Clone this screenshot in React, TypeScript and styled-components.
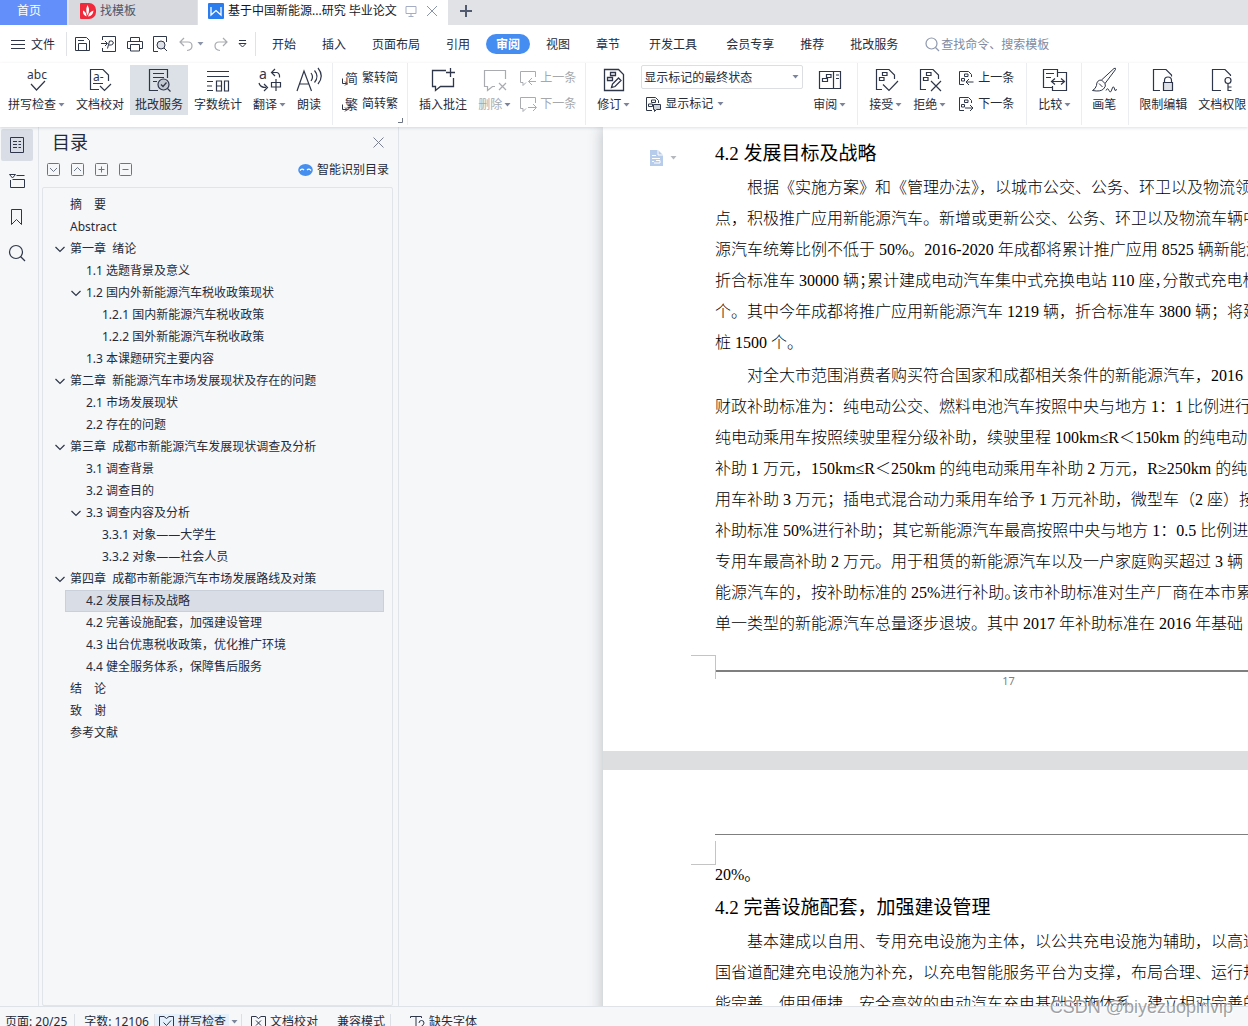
import React from "react";
import styled, { createGlobalStyle, css } from "styled-components";

const uiFont = `"Noto Sans", "Noto Sans CJK SC", sans-serif`;
const docFont = `"Liberation Serif", "Noto Sans CJK SC", serif`;
const ink = "#262b3a";

const GlobalStyle = createGlobalStyle`
  * { box-sizing: border-box; }
  body { margin: 0; overflow: hidden; background: #f5f7f9; }
  button, input, select { font: inherit; color: inherit; }
  button { border: 0; background: none; padding: 0; cursor: pointer; }
  svg { display: block; flex: none; overflow: visible; }
`;

const Shell = styled.div`
  display: flex;
  flex-direction: column;
  height: 100vh;
  overflow: hidden;
  font: 12px/18px ${uiFont};
  color: ${ink};
  white-space: nowrap;
`;

/* ---------- window tabs ---------- */
const TabBar = styled.div`
  display: flex;
  height: 25px;
  flex: none;
  background: #e1e2e6;
`;
const WindowTab = styled.button<{ $kind: "home" | "idle" | "open" }>`
  display: flex;
  align-items: center;
  gap: 4px;
  height: 25px;
  padding-bottom: 4px;
  ${(p) =>
    p.$kind === "home" &&
    css`
      width: 67px;
      padding-right: 9px;
      justify-content: center;
      color: #fff;
      background: #628ffa;
      margin-right: 2px;
    `}
  ${(p) =>
    p.$kind === "idle" &&
    css`
      width: 128px;
      padding-left: 11px;
      color: #50566a;
      background: #d7d9de;
      margin-right: 1px;
    `}
  ${(p) =>
    p.$kind === "open" &&
    css`
      width: 250px;
      padding-left: 10px;
      color: #15181f;
      background: #fff;
    `}
`;
const TabActions = styled.span`
  display: flex;
  align-items: center;
  gap: 9px;
  margin-left: 4px;
`;
const NewTab = styled.button`
  padding: 0 12px 4px;
`;

/* ---------- menu ---------- */
const MenuBar = styled.nav`
  display: flex;
  align-items: center;
  height: 38px;
  flex: none;
  background: #fff;
`;
const FileButton = styled.button`
  display: flex;
  align-items: center;
  gap: 6px;
  width: 66px;
  padding: 2px 0 0 11px;
`;
const Divider = styled.span`
  width: 1px;
  height: 24px;
  background: #e0e2e6;
`;
const QuickTools = styled.div`
  display: flex;
  align-items: center;
  justify-content: space-between;
  width: 188px;
  padding: 0 8px;
`;
const QuickButton = styled.button`
  display: flex;
  align-items: center;
  gap: 4px;
`;
const MenuTabs = styled.div`
  display: flex;
  align-items: center;
  gap: 6px;
  padding-left: 6px;
`;
const MenuTab = styled.button<{ $active?: boolean; $wide?: boolean }>`
  height: 20px;
  padding: 2px ${(p) => (p.$wide ? 13 : 10)}px 0;
  border-radius: 10px;
  ${(p) =>
    p.$active &&
    css`
      color: #fff;
      font-weight: 700;
      background: #468df2;
    `}
`;
const SearchField = styled.label`
  display: flex;
  align-items: center;
  gap: 1px;
  margin-left: 17px;
  padding-top: 1px;
  color: #808aa3;
`;
const SearchInput = styled.input`
  width: 130px;
  padding: 0;
  border: 0;
  outline: 0;
  background: none;
  &::placeholder { color: #808aa3; opacity: 1; }
`;

/* ---------- ribbon ---------- */
const Ribbon = styled.div`
  position: relative;
  z-index: 2;
  display: flex;
  gap: 1px;
  height: 64px;
  flex: none;
  padding: 2px 0 0 3px;
  background: #fff;
  box-shadow: 0 1px 3px rgba(40, 50, 70, 0.16);
`;
const BigButton = styled.button<{ $active?: boolean; $muted?: boolean }>`
  display: flex;
  flex-direction: column;
  align-items: flex-start;
  gap: 2px;
  flex: none;
  height: 50px;
  padding: 2px 5px 0;
  ${(p) => p.$active && css`background: #dbe1e6;`}
  ${(p) => p.$muted && css`color: #a6a8ad;`}
`;
const IconSlot = styled.span<{ $label: number }>`
  display: flex;
  justify-content: center;
  min-width: ${(p) => p.$label}px;
  height: 26px;
`;
const LabelLine = styled.span`
  display: flex;
  align-items: center;
  gap: 2px;
  height: 20px;
`;
const SmallColumn = styled.div<{ $pad?: number }>`
  display: flex;
  flex-direction: column;
  gap: 4px;
  flex: none;
  padding: 2px ${(p) => p.$pad ?? 0}px 0;
`;
const SmallButton = styled.button<{ $muted?: boolean }>`
  display: flex;
  align-items: center;
  gap: 4px;
  height: 22px;
  padding: 0 3px;
  ${(p) => p.$muted && css`color: #a6a8ad;`}
`;
const RibbonRule = styled.span<{ $tight?: boolean }>`
  width: 1px;
  height: 62px;
  flex: none;
  margin: -2px ${(p) => (p.$tight ? 4 : 5)}px 0;
  background: #ebedf0;
`;
const LaunchRule = styled(RibbonRule)`
  display: flex;
  align-items: flex-end;
  justify-content: flex-end;
  padding-bottom: 2px;
  & > svg { margin-right: 5px; }
`;
const MarkupColumn = styled.div`
  display: flex;
  flex-direction: column;
  gap: 5px;
  flex: none;
  width: 171px;
  padding: 0 4px 0 5px;
`;
const SelectBox = styled.label`
  display: flex;
  align-items: center;
  height: 24px;
  padding-right: 3px;
  border: 1px solid #dcdee2;
  border-radius: 2px;
`;
const MarkupSelect = styled.select`
  flex: 1;
  min-width: 0;
  padding: 1px 2px 0;
  border: 0;
  outline: 0;
  appearance: none;
  background: none;
`;
const MarkupButton = styled(SmallButton)`
  height: 20px;
  padding-left: 4px;
`;

/* ---------- body ---------- */
const Main = styled.main`
  display: flex;
  flex: 1;
  min-height: 0;
`;
const Rail = styled.aside`
  display: flex;
  flex-direction: column;
  gap: 4px;
  width: 39px;
  flex: none;
  padding: 2px 0 0 1px;
  border-right: 1px solid #e1e4ea;
`;
const RailButton = styled.button<{ $active?: boolean }>`
  display: flex;
  align-items: center;
  justify-content: center;
  width: 32px;
  height: 32px;
  border-radius: 2px;
  background: ${(p) => (p.$active ? "#d9dee6" : "none")};
`;
const Outline = styled.section`
  display: flex;
  flex-direction: column;
  width: 360px;
  flex: none;
  padding: 0 5px 0 3px;
  border-right: 1px solid #e1e4ea;
`;
const OutlineHead = styled.header`
  display: flex;
  align-items: center;
  justify-content: space-between;
  height: 30px;
  padding: 0 9px 0 10px;
`;
const OutlineTitle = styled.h2`
  margin: 0;
  font-size: 18px;
  line-height: 28px;
  font-weight: 400;
`;
const OutlineTools = styled.div`
  display: flex;
  align-items: center;
  gap: 11px;
  height: 24px;
  padding: 0 4px 0 5px;
  margin-bottom: 6px;
`;
const SmartButton = styled.button`
  display: flex;
  align-items: center;
  gap: 4px;
  margin-left: auto;
  padding-top: 2px;
`;
const Tree = styled.ul`
  flex: 1;
  margin: 0;
  padding: 6px 8px 0 11px;
  list-style: none;
  border: 1px solid #e1e4ea;
  border-radius: 2px;
`;
const TreeItem = styled.li`
  display: flex;
`;
const TreeButton = styled.button<{ $level: number; $active?: boolean }>`
  display: flex;
  align-items: center;
  width: 100%;
  height: 22px;
  margin-left: ${(p) => (p.$active ? 11 : 0)}px;
  padding-left: ${(p) => p.$level * 16 - (p.$active ? 11 : 0)}px;
  white-space: pre;
  ${(p) =>
    p.$active &&
    css`
      background: #d9dde5;
      box-shadow: inset 0 0 0 1px #c9d0da;
    `}
`;
const Twisty = styled.span`
  display: flex;
  width: 16px;
`;

/* ---------- document ---------- */
const Canvas = styled.div`
  flex: 1;
  min-width: 0;
  padding-left: 204px;
  overflow: hidden;
`;
const Sheets = styled.div`
  display: flex;
  flex-direction: column;
  gap: 19px;
  width: 794px;
  background: #dddee0;
  box-shadow: 0 0 14px rgba(60, 66, 76, 0.32);
`;
const Sheet = styled.article`
  padding: 0 96px 0 112px;
  background: #fff;
  color: #000;
  font: 16px/31px ${docFont};
`;
const FirstSheet = styled(Sheet)`
  height: 624px;
  padding-top: 9px;
`;
const SecondSheet = styled(Sheet)`
  height: 1123px;
  padding-top: 64px;
`;
const HeadingRow = styled.div`
  display: flex;
  align-items: center;
  margin-left: -66px;
`;
const ParagraphMenu = styled.button`
  display: flex;
  align-items: center;
  gap: 7px;
  width: 66px;
  padding-top: 8px;
`;
const Heading = styled.h3`
  margin: 0;
  font-size: 19px;
  line-height: 36px;
  font-weight: 400;
`;
const Paragraph = styled.p`
  margin: 0 0 2px;
  font-weight: 300;
  text-indent: 32px;
`;
const Line = styled.span`
  display: block;
  & + & { text-indent: 0; }
`;
const Half = styled.span`
  font-feature-settings: "halt";
`;
const MarginRow = styled.div`
  display: flex;
  align-items: flex-start;
  margin-left: -24px;
`;
const CropMark = styled.span<{ $edge: "top" | "bottom" }>`
  width: 25px;
  height: 24px;
  margin-right: -1px;
  flex: none;
  border-right: 1px solid #c4c4c4;
  border-${(p) => p.$edge}: 1px solid #c4c4c4;
`;
const PageFoot = styled.footer`
  flex: 1;
  margin: 15px 0 0 1px;
  border-top: 2px solid #7f7f7f;
  font: 11px/18px ${uiFont};
  color: #808080;
  text-align: center;
`;
const FootRow = styled(MarginRow)`
  margin-top: 16px;
`;
const PageHead = styled.header`
  height: 7px;
  border-top: 1px solid #7f7f7f;
`;
const Carried = styled.p`
  margin: 18px 0 0;
`;

/* ---------- status ---------- */
const StatusBar = styled.footer`
  display: flex;
  align-items: flex-start;
  height: 20px;
  flex: none;
  padding: 7px 0 0 5px;
  overflow: hidden;
  border-top: 1px solid #dfe2e7;
  background: #f5f7f9;
  line-height: 16px;
`;
const StatusItem = styled.button<{ $lit?: boolean }>`
  display: flex;
  align-items: center;
  gap: 4px;
  height: 16px;
  padding: ${(p) => (p.$lit ? "0 3px 0 4px" : "0")};
  background: ${(p) => (p.$lit ? "#e4f0fb" : "none")};
`;
const StatusGroup = styled.div`
  display: flex;
  gap: 19px;
`;
const StatusRule = styled.span<{ $before?: number; $after?: number }>`
  width: 1px;
  height: 16px;
  margin: 0 ${(p) => p.$after ?? 0}px 0 ${(p) => p.$before ?? 0}px;
  background: #dcdfe5;
`;
const StatusArrow = styled.button`
  padding: 6px 0 0 2px;
`;
const Watermark = styled.div`
  position: absolute;
  right: 15px;
  bottom: 7px;
  z-index: 3;
  font: 18px/24px "Liberation Sans", sans-serif;
  color: rgba(130, 130, 134, 0.75);
  text-shadow: 1px 1px 1px #fff;
`;

/* ---------- drawings ---------- */
type DrawProps = { w: number; h: number; c?: string; s?: number; children: React.ReactNode };
const Draw = ({ w, h, c = "#2f3649", s = 1, children }: DrawProps) => (
  <svg width={w} height={h} viewBox={`0 0 ${w} ${h}`} fill="none" stroke={c} strokeWidth={s} aria-hidden="true">
    {children}
  </svg>
);
const Caret = ({ c = "#7b849b" }: { c?: string }) => (
  <svg width="7" height="4" viewBox="0 0 7 4" aria-hidden="true">
    <path d="M0.500 0H6.500L3.500 3.600Z" fill={c} />
  </svg>
);
const glyph = { stroke: "none", fill: "#2f3649", fontFamily: "Noto Sans, Noto Sans CJK SC, sans-serif" };

const SpellIcon = () => (
  <Draw w={24} h={26} s={1.2}>
    <text x="12" y="12" fontSize="12" textAnchor="middle" {...glyph}>abc</text>
    <path d="M6 17l5.500 6L20 14" />
  </Draw>
);
const ProofIcon = () => (
  <Draw w={24} h={26} s={1.2}>
    <path d="M11 22.500H2.500V2.500H15L20.500 8V14" />
    <text x="5" y="14" fontSize="12" {...glyph}>a-</text>
    <path d="M5 16.500H15M12 19l4.500 4.500L23 17" />
  </Draw>
);
const ReviewServiceIcon = () => (
  <Draw w={24} h={26} s={1.2}>
    <path d="M11 23.500H2.500V2.500H20.500V11M6 6.500H17M6 10.500H17M6 14.500H10" />
    <circle cx="16.500" cy="17.500" r="5.500" fill="#c3c9d1" />
    <path d="M20.500 21.500l3 3M14 17.500l2 2 3.500-4" />
  </Draw>
);
const CountIcon = () => (
  <Draw w={24} h={26} s={1.2}>
    <path d="M1 4.500H23M1 9.500H23M1 14.500H7M1 19H6M1 23.500H7M10.500 14H15.500V24H10.500ZM10.500 19H15.500M18.500 14H22.500V24H18.500Z" />
  </Draw>
);
const TranslateIcon = () => (
  <Draw w={24} h={26} s={1.2}>
    <text x="1" y="12" fontSize="14" {...glyph}>a</text>
    <path d="M17 2l-3.500 3.500L17 9M14 5.500h5q3 1 2.500 5M1 16q1 4.500 7 4.500M6 17l3.500 3.500L6 24" />
    <path d="M13.500 15.500H22.500V20H13.500ZM18 12V24" />
  </Draw>
);
const ReadIcon = () => (
  <Draw w={24} h={26} s={1.2}>
    <path d="M0 24L7 4 14.500 24M2.500 17H12M14 6q3 4 0 8M17.500 3.500q5 6 0 12M21 1q6.500 8 0 16" />
  </Draw>
);
const CharIcon = ({ ch }: { ch: string }) => (
  <Draw w={16} h={16}>
    <text x="3" y="13" fontSize="13" {...glyph}>{ch}</text>
    <path d="M0.500 8.500V13.500H4.500M3 11.500l2 2-2 2" />
  </Draw>
);
const CommentIcon = () => (
  <Draw w={24} h={26} s={1.3}>
    <path d="M15 3.500H1.500V19.500H4.500V23.500L9.500 19.500H22.500V11M19.500 1V10M15 5.500H24" />
  </Draw>
);
const DeleteIcon = () => (
  <Draw w={24} h={26} c="#a9abb0" s={1.2}>
    <path d="M22.500 12V3.500H1.500V19.500H4.500V23.500L9.500 19.500H12M16 16l7 7M23 16l-7 7" />
  </Draw>
);
const StepComment = ({ next }: { next?: boolean }) => (
  <Draw w={16} h={16} c="#a9abb0">
    <path d="M15.500 7V1.500H0.500V12.500H3V15.500L6 12.500" />
    <path d={next ? "M8 11.500H16M13 8l3.500 3.500L13 15" : "M8.500 11.500H16M12 8l-3.500 3.500L12 15"} />
  </Draw>
);
const ReviseIcon = () => (
  <Draw w={22} h={26} s={1.3}>
    <path d="M1.500 2.500H15.500L20.500 7.500V23.500H1.500Z" />
    <path d="M7.500 5.500H12.500V8.500H7.500ZM4.500 10.500H9.500V13.500H4.500ZM8.500 20.500l1-3.500 6-6 2.500 2.500-6 6Z" />
  </Draw>
);
const MarkupIcon = () => (
  <Draw w={16} h={16}>
    <path d="M7 14.500H1.500V1.500H10.500L13.500 4.500V7M6.500 4H10.500V6.500H6.500ZM3.500 8H7.500V10.500H3.500Z" />
    <path d="M8.500 8.500H15.500V13.500H11.500L9.500 15.500V13.500H8.500Z" fill="#cfd3da" />
  </Draw>
);
const PaneIcon = () => (
  <Draw w={24} h={26} s={1.2}>
    <path d="M1.500 4.500H22.500V21.500H1.500ZM15.500 4.500V21.500M8.500 7.500H13V10.500H8.500ZM4.500 11.500H9.500V14.500H4.500ZM18 8H21M18 11.500H21" />
  </Draw>
);
const VerdictIcon = ({ no }: { no?: boolean }) => (
  <Draw w={24} h={26} s={1.2}>
    <path d="M8 22.500H2.500V2.500H15L20.500 8V12M8.500 5.500H13V8.500H8.500ZM5.500 10.500H10V13.500H5.500Z" />
    <path d={no ? "M13 14l10 10M23 14L13 24" : "M9 17.500l6 6L24 14"} />
  </Draw>
);
const StepChange = ({ next }: { next?: boolean }) => (
  <Draw w={16} h={16}>
    <path d="M6 14.500H1.500V1.500H10.500L13.500 4.500V7M6.500 4H10V6.500H6.500ZM3.500 8.500H6.500V11H3.500Z" />
    <path d={next ? "M7 12H15M12 9l3 3-3 3" : "M8 12H15.500M11 9l-3 3 3 3"} />
  </Draw>
);
const CompareIcon = () => (
  <Draw w={26} h={26} s={1.2}>
    <path d="M10 20.500H1.500V2.500H15.500V10M15.500 5.500H24.500V23.500H10.500V19M4 6.500H12M4 10.500H9M10 14.500H22M13 11.500l-3.500 3 3.500 3M19 11.500l3.500 3-3.500 3" />
  </Draw>
);
const BrushIcon = () => (
  <Draw w={26} h={26}>
    <path d="M9.500 13L22 1.500q2-1 1.500 1L13 16.500ZM9.500 13q-5 0-5 5.500-1 3.500-4 5 8 1.500 11-1.500 3-3 1.500-5.500M7 16.500l3.500 3.500" />
    <path d="M14 23.500q1.500-3.500 3 0t3-1.500 3 1.500l2-1" />
  </Draw>
);
const LockIcon = () => (
  <Draw w={24} h={26} s={1.2}>
    <path d="M9 23.500H2.500V2.500H15L20.500 8V9.500" />
    <path d="M12.500 15.500H21.500V23.500H12.500Z" fill="#dfe2e6" />
    <path d="M13.500 15V13.500a3.500 3.500 0 0 1 7 0V15" />
  </Draw>
);
const KeyIcon = () => (
  <Draw w={24} h={26} s={1.2}>
    <path d="M11 23.500H2.500V2.500H15L20.500 8V9" />
    <circle cx="18" cy="13.500" r="3" />
    <path d="M18 16.500V24M18 20H21.500M18 23.500H21.500" />
  </Draw>
);
const BoxTool = ({ d }: { d: string }) => (
  <Draw w={13} h={13} c="#6d7484">
    <rect x="0.500" y="0.500" width="12" height="12" rx="1" />
    <path d={d} />
  </Draw>
);

type BigProps = { icon: React.ReactNode; label: string; menu?: boolean; active?: boolean; muted?: boolean };
const Big = ({ icon, label, menu, active, muted }: BigProps) => (
  <BigButton $active={active} $muted={muted}>
    <IconSlot $label={label.length * 12 + (menu ? 9 : 0)}>{icon}</IconSlot>
    <LabelLine>
      {label}
      {menu && <Caret />}
    </LabelLine>
  </BigButton>
);

const outline: { text: string; level: number; open?: boolean; active?: boolean }[] = [
  { text: "摘　要", level: 0 },
  { text: "Abstract", level: 0 },
  { text: "第一章  绪论", level: 0, open: true },
  { text: "1.1 选题背景及意义", level: 1 },
  { text: "1.2 国内外新能源汽车税收政策现状", level: 1, open: true },
  { text: "1.2.1 国内新能源汽车税收政策", level: 2 },
  { text: "1.2.2 国外新能源汽车税收政策", level: 2 },
  { text: "1.3 本课题研究主要内容", level: 1 },
  { text: "第二章  新能源汽车市场发展现状及存在的问题", level: 0, open: true },
  { text: "2.1 市场发展现状", level: 1 },
  { text: "2.2 存在的问题", level: 1 },
  { text: "第三章  成都市新能源汽车发展现状调查及分析", level: 0, open: true },
  { text: "3.1 调查背景", level: 1 },
  { text: "3.2 调查目的", level: 1 },
  { text: "3.3 调查内容及分析", level: 1, open: true },
  { text: "3.3.1 对象——大学生", level: 2 },
  { text: "3.3.2 对象——社会人员", level: 2 },
  { text: "第四章  成都市新能源汽车市场发展路线及对策", level: 0, open: true },
  { text: "4.2 发展目标及战略", level: 1, active: true },
  { text: "4.2 完善设施配套，加强建设管理", level: 1 },
  { text: "4.3 出台优惠税收政策，优化推广环境", level: 1 },
  { text: "4.4 健全服务体系，保障售后服务", level: 1 },
  { text: "结　论", level: 0 },
  { text: "致　谢", level: 0 },
  { text: "参考文献", level: 0 },
];

const menuTabs = ["开始", "插入", "页面布局", "引用", "审阅", "视图", "章节", "开发工具", "会员专享", "推荐", "批改服务"];

export default function App() {
  return (
    <Shell>
      <GlobalStyle />
      <TabBar>
        <WindowTab $kind="home">首页</WindowTab>
        <WindowTab $kind="idle">
          <svg width="16" height="16" viewBox="0 0 16 16" aria-hidden="true">
            <path d="M1 0H9A7 7 0 0 1 16 7V9A7 7 0 0 1 9 16H1Q0 16 0 15V1Q0 0 1 0Z" fill="#f02a3a" />
            <path d="M7.500 12.500Q5 7 7.500 2 10.500 7 7.500 12.500ZM6.500 13.500Q2.500 12 3 7.500 6.500 9 6.500 13.500ZM8 13.500Q9 9 13.500 7.500 13 13 8 13.500Z" fill="#fff" />
          </svg>
          找模板
        </WindowTab>
        <WindowTab $kind="open">
          <svg width="16" height="16" viewBox="0 0 16 16" aria-hidden="true">
            <rect width="16" height="16" rx="1" fill="#2b7ced" />
            <path d="M3 4V12L8 7.500 13 12V4" fill="none" stroke="#fff" strokeWidth="1.300" />
          </svg>
          基于中国新能源...研究 毕业论文
          <TabActions>
            <Draw w={12} h={12} c="#a4adc4">
              <path d="M1 1.500H11V8.500H1ZM6 8.500V11M3.500 11.500H8.500" />
            </Draw>
            <Draw w={12} h={12} c="#8b94ad">
              <path d="M1 1L11 11M11 1L1 11" />
            </Draw>
          </TabActions>
        </WindowTab>
        <NewTab aria-label="+">
          <Draw w={12} h={12} c="#525a70" s={2}>
            <path d="M6 0V12M0 6H12" />
          </Draw>
        </NewTab>
      </TabBar>

      <MenuBar>
        <FileButton>
          <Draw w={14} h={12}>
            <path d="M0 1.500H14M0 5.500H14M0 9.500H14" />
          </Draw>
          文件
        </FileButton>
        <Divider />
        <QuickTools>
          <QuickButton>
            <Draw w={16} h={16}>
              <path d="M0.500 1.500H11.500L14.500 4.500V14.500H0.500ZM3.500 14V7.500H11.500V14M3 4.500H9" />
            </Draw>
          </QuickButton>
          <QuickButton>
            <Draw w={16} h={16}>
              <path d="M1.500 4V0.500H14.500V15.500H1.500V12M0 7.500H6M4 5l2.500 2.500L4 10M6.500 12.500L8.500 5H11Q13 5.500 12 8 10.500 9.500 8 9" />
            </Draw>
          </QuickButton>
          <QuickButton>
            <Draw w={16} h={16}>
              <path d="M3.500 5V1.500H12.500V5M3 12.500H0.500V5.500H15.500V12.500H13M3.500 8.500H12.500V15H3.500Z" />
            </Draw>
          </QuickButton>
          <QuickButton>
            <Draw w={15} h={16}>
              <path d="M5 15.500H0.500V0.500H13.500V6" />
              <circle cx="8" cy="9" r="4" fill="#dfe2e8" />
              <path d="M11 12l3 3" />
            </Draw>
          </QuickButton>
          <QuickButton>
            <Draw w={14} h={15} c="#a9abb0" s={1.2}>
              <path d="M5 1L1 5l4 4M1 5H9q4 0 4 4t-5 4.500" />
            </Draw>
            <Caret c="#8b94a8" />
          </QuickButton>
          <QuickButton>
            <Draw w={14} h={15} c="#a9abb0" s={1.2}>
              <path d="M9 1l4 4-4 4M13 5H5q-4 0-4 4t5 4.500" />
            </Draw>
          </QuickButton>
          <QuickButton>
            <Draw w={9} h={8}>
              <path d="M1 0.500H8M1 3.500L4.500 7 8 3.500Z" />
            </Draw>
          </QuickButton>
        </QuickTools>
        <Divider />
        <MenuTabs>
          {menuTabs.map((t) => (
            <MenuTab key={t} $active={t === "审阅"} $wide={t === "开发工具"}>
              {t}
            </MenuTab>
          ))}
        </MenuTabs>
        <SearchField>
          <Draw w={15} h={15} c="#8f98ae" s={1.2}>
            <circle cx="6.500" cy="6.500" r="5.500" />
            <path d="M10.500 10.500L14 14" />
          </Draw>
          <SearchInput placeholder="查找命令、搜索模板" />
        </SearchField>
      </MenuBar>

      <Ribbon>
        <Big icon={<SpellIcon />} label="拼写检查" menu />
        <Big icon={<ProofIcon />} label="文档校对" />
        <Big icon={<ReviewServiceIcon />} label="批改服务" active />
        <Big icon={<CountIcon />} label="字数统计" />
        <Big icon={<TranslateIcon />} label="翻译" menu />
        <Big icon={<ReadIcon />} label="朗读" />
        <RibbonRule />
        <SmallColumn>
          <SmallButton><CharIcon ch="简" />繁转简</SmallButton>
          <SmallButton><CharIcon ch="繁" />简转繁</SmallButton>
        </SmallColumn>
        <LaunchRule>
          <Draw w={5} h={5} c="#6d7484">
            <path d="M4.500 0V4.500H0" />
          </Draw>
        </LaunchRule>
        <Big icon={<CommentIcon />} label="插入批注" />
        <Big icon={<DeleteIcon />} label="删除" menu muted />
        <SmallColumn>
          <SmallButton $muted><StepComment />上一条</SmallButton>
          <SmallButton $muted><StepComment next />下一条</SmallButton>
        </SmallColumn>
        <RibbonRule />
        <Big icon={<ReviseIcon />} label="修订" menu />
        <MarkupColumn>
          <SelectBox>
            <MarkupSelect defaultValue="final">
              <option value="final">显示标记的最终状态</option>
            </MarkupSelect>
            <Caret />
          </SelectBox>
          <MarkupButton><MarkupIcon />显示标记<Caret /></MarkupButton>
        </MarkupColumn>
        <Big icon={<PaneIcon />} label="审阅" menu />
        <RibbonRule />
        <Big icon={<VerdictIcon />} label="接受" menu />
        <Big icon={<VerdictIcon no />} label="拒绝" menu />
        <SmallColumn $pad={3}>
          <SmallButton><StepChange />上一条</SmallButton>
          <SmallButton><StepChange next />下一条</SmallButton>
        </SmallColumn>
        <RibbonRule />
        <Big icon={<CompareIcon />} label="比较" menu />
        <RibbonRule $tight />
        <Big icon={<BrushIcon />} label="画笔" />
        <RibbonRule $tight />
        <Big icon={<LockIcon />} label="限制编辑" />
        <Big icon={<KeyIcon />} label="文档权限" />
      </Ribbon>

      <Main>
        <Rail>
          <RailButton $active>
            <Draw w={16} h={18}>
              <path d="M1.500 1.500H14.500V16.500H1.500ZM4 5.500H8M9.500 5.500H12M4 8.500H8M9.500 8.500H12M4 11.500H8M9.500 11.500H12" />
            </Draw>
          </RailButton>
          <RailButton>
            <Draw w={18} h={16}>
              <path d="M1.500 1.500H7.500L4.500 5ZM8.500 2.500H16.500M2.500 7V14.500H16.500V6.500H4.500" />
            </Draw>
          </RailButton>
          <RailButton>
            <Draw w={14} h={18}>
              <path d="M1.500 1.500H11.500V16.500L6.500 11.500 1.500 16.500Z" />
            </Draw>
          </RailButton>
          <RailButton>
            <Draw w={18} h={18} s={1.2}>
              <circle cx="8" cy="8" r="6.500" />
              <path d="M12.500 12.500L17 17" />
            </Draw>
          </RailButton>
        </Rail>

        <Outline>
          <OutlineHead>
            <OutlineTitle>目录</OutlineTitle>
            <QuickButton>
              <Draw w={11} h={11} c="#7b8090">
                <path d="M0.500 0.500L10.500 10.500M10.500 0.500L0.500 10.500" />
              </Draw>
            </QuickButton>
          </OutlineHead>
          <OutlineTools>
            <QuickButton><BoxTool d="M3 5l3.500 3.500L10 5" /></QuickButton>
            <QuickButton><BoxTool d="M3 8l3.500-3.500L10 8" /></QuickButton>
            <QuickButton><BoxTool d="M6.500 3.500V9.500M3.500 6.500H9.500" /></QuickButton>
            <QuickButton><BoxTool d="M3.500 6.500H9.500" /></QuickButton>
            <SmartButton>
              <svg width="15" height="12" viewBox="0 0 15 12" aria-hidden="true">
                <ellipse cx="7.500" cy="6" rx="7.300" ry="6" fill="#468fee" />
                <path d="M2 6.500Q4 4 6 6M9 6Q11 4 13 6.500" fill="none" stroke="#fff" strokeWidth="1.300" />
              </svg>
              智能识别目录
            </SmartButton>
          </OutlineTools>
          <Tree>
            {outline.map((o) => (
              <TreeItem key={o.text}>
                <TreeButton $level={o.level} $active={o.active}>
                  <Twisty>
                    {o.open && (
                      <Draw w={12} h={8} s={1.2}>
                        <path d="M1.500 2L6 6.500 10.500 2" />
                      </Draw>
                    )}
                  </Twisty>
                  {o.text}
                </TreeButton>
              </TreeItem>
            ))}
          </Tree>
        </Outline>

        <Canvas>
          <Sheets>
            <FirstSheet>
              <HeadingRow>
                <ParagraphMenu>
                  <svg width="14" height="16" viewBox="0 0 14 16" aria-hidden="true">
                    <path d="M1 0H9L14 5V16H1Z" fill="#b7cbea" />
                    <path d="M9 0V5H14M3 5.500H7M3 8.500H11M3 11.500H5M7 10.500H11V13H5" fill="none" stroke="#fff" />
                  </svg>
                  <Caret c="#b5b8be" />
                </ParagraphMenu>
                <Heading>4.2 发展目标及战略</Heading>
              </HeadingRow>
              <Paragraph>
                <Line>根据《实施方案》和《管理办法》，以城市公交、公务、环卫以及物流领</Line>
                <Line>点，积极推广应用新能源汽车。新增或更新公交、公务、环卫以及物流车辆中</Line>
                <Line>源汽车统筹比例不低于 50%。2016-2020 年成都将累计推广应用 8525 辆新能源</Line>
                <Line>折合标准车 30000 辆<Half>；</Half>累计建成电动汽车集中式充换电站 110 座<Half>，</Half>分散式充电桩</Line>
                <Line>个。其中今年成都将推广应用新能源汽车 1219 辆，折合标准车 3800 辆；将建</Line>
                <Line>桩 1500 个。</Line>
              </Paragraph>
              <Paragraph>
                <Line>对全大市范围消费者购买符合国家和成都相关条件的新能源汽车，2016</Line>
                <Line>财政补助标准为：纯电动公交、燃料电池汽车按照中央与地方 1：1 比例进行</Line>
                <Line>纯电动乘用车按照续驶里程分级补助，续驶里程 100km≤R＜150km 的纯电动</Line>
                <Line>补助 1 万元，150km≤R＜250km 的纯电动乘用车补助 2 万元，R≥250km 的纯</Line>
                <Line>用车补助 3 万元；插电式混合动力乘用车给予 1 万元补助，微型车（2 座）按</Line>
                <Line>补助标准 50%进行补助；其它新能源汽车最高按照中央与地方 1：0.5 比例进行</Line>
                <Line>专用车最高补助 2 万元。用于租赁的新能源汽车以及一户家庭购买超过 3 辆</Line>
                <Line>能源汽车的，按补助标准的 25%进行补助<Half>。</Half>该市补助标准对生产厂商在本市累</Line>
                <Line>单一类型的新能源汽车总量逐步退坡。其中 2017 年补助标准在 2016 年基础</Line>
              </Paragraph>
              <FootRow>
                <CropMark $edge="top" />
                <PageFoot>17</PageFoot>
              </FootRow>
            </FirstSheet>
            <SecondSheet>
              <PageHead />
              <MarginRow>
                <CropMark $edge="bottom" />
                <Carried>20%。</Carried>
              </MarginRow>
              <Heading>4.2 完善设施配套，加强建设管理</Heading>
              <Paragraph>
                <Line>基本建成以自用、专用充电设施为主体，以公共充电设施为辅助，以高速</Line>
                <Line>国省道配建充电设施为补充，以充电智能服务平台为支撑，布局合理、运行规</Line>
                <Line>能完善、使用便捷、安全高效的电动汽车充电基础设施体系，建立相对完善的</Line>
              </Paragraph>
            </SecondSheet>
          </Sheets>
        </Canvas>
      </Main>

      <StatusBar>
        <StatusItem>页面: 20/25</StatusItem>
        <StatusRule $before={7} $after={9} />
        <StatusItem>字数: 12106</StatusItem>
        <StatusRule $before={5} />
        <StatusItem $lit>
          <Draw w={15} h={15}>
            <path d="M5 1.500H0.500V14.500H14.500V1.500H10M5 1.500l2.500 2 2.500-2M4.500 7.500l3 3 4.500-5" />
          </Draw>
          拼写检查
        </StatusItem>
        <StatusArrow><Caret /></StatusArrow>
        <StatusRule $before={3} $after={9} />
        <StatusGroup>
          <StatusItem>
            <Draw w={15} h={15}>
              <path d="M5 1.500H0.500V14.500H14.500V1.500H10M5 1.500l2.500 2 2.500-2M5 5.500l5 5M10 5.500l-5 5" />
            </Draw>
            文档校对
          </StatusItem>
          <StatusItem>兼容模式</StatusItem>
        </StatusGroup>
        <StatusRule $before={5} $after={19} />
        <StatusItem>
          <Draw w={15} h={15}>
            <path d="M0.500 3V1.500H11.500V3M6 1.500V14.500H4M9 8q0-2.500 2.500-2.500T14 8q0 2-2.500 3V12.500M11.500 14V15" />
          </Draw>
          缺失字体
        </StatusItem>
      </StatusBar>
      <Watermark>CSDN @biyezuopinvip</Watermark>
    </Shell>
  );
}
